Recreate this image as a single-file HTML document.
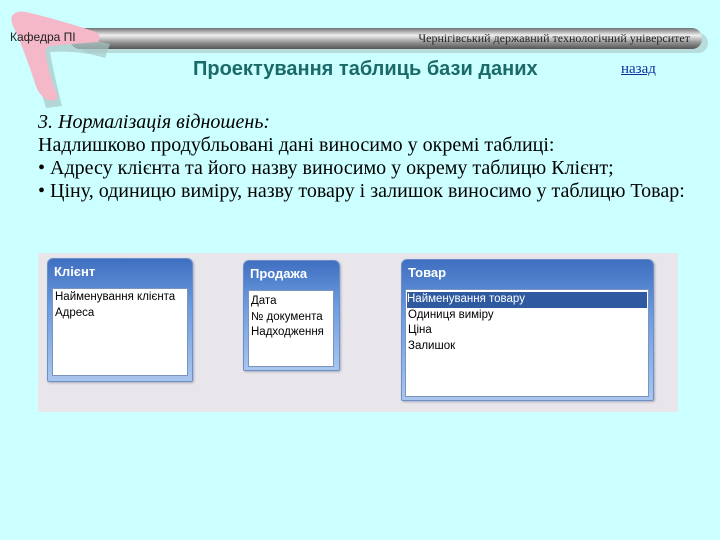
<!DOCTYPE html>
<html><head><meta charset="utf-8"><style>
body{margin:0;width:720px;height:540px;background:#ccffff;position:relative;overflow:hidden;font-family:"Liberation Serif",serif}
.a{position:absolute}
.win{position:absolute;border-radius:6px 6px 2px 2px;background:linear-gradient(#3f6fc0,#6c9be0 40%,#a9c6ee);border:1px solid #6b8fc8;box-shadow:1px 1px 2px #aab}
.win .t{position:absolute;left:6px;top:5px;color:#fff;font:bold 13px "Liberation Sans",sans-serif}
.list{position:absolute;background:#fff;border:1px solid #7b95c0;font:11.5px "Liberation Sans",sans-serif;line-height:15.5px;padding:1px 2px;box-sizing:border-box;white-space:nowrap}
.txt{font-size:20px;color:#000;line-height:23px;white-space:nowrap}
</style></head><body>
<svg class="a" style="left:0;top:0" width="720" height="110">
<defs><linearGradient id="g" x1="0" y1="0" x2="0" y2="1"><stop offset="0" stop-color="#707070"/><stop offset=".35" stop-color="#f0f0f0"/><stop offset=".7" stop-color="#909090"/><stop offset="1" stop-color="#555"/></linearGradient></defs>
<rect x="80" y="33" width="628" height="20" rx="10" fill="#a8c4c4" opacity=".6"/>
<rect x="70" y="28" width="632" height="21" rx="10" fill="url(#g)"/>
<path d="M26 26 Q34 70 46 108 L62 106 Q54 75 50 52 Q80 50 105 58 L110 44 Q70 34 26 26Z" fill="#a8c4c4" opacity=".7"/>
<path d="M12 16 Q16 10 26 12 Q60 20 96 32 Q102 36 98 42 Q70 44 50 46 Q44 48 46 56 Q50 80 58 96 Q56 102 48 100 Q38 96 34 80 Q24 50 14 28 Q10 20 12 16Z" fill="#f4b8c8"/>
<text x="10" y="41" font-family="Liberation Sans,sans-serif" font-size="12" fill="#222">Кафедра ПІ</text>
<text x="690" y="42" text-anchor="end" font-family="Liberation Serif,serif" font-size="12" fill="#222">Чернігівський державний технологічний університет</text>
</svg>
<div class="a" style="left:193px;top:58px;font:bold 20px 'Liberation Sans',sans-serif;color:#1a6a6a;white-space:nowrap">Проектування таблиць бази даних</div>
<div class="a" style="left:621px;top:61px;font-size:15px;color:#1030a0;text-decoration:underline">назад</div>
<div class="a txt" style="left:38px;top:111px"><i>3. Нормалізація відношень:</i><br>Надлишково продубльовані дані виносимо у окремі таблиці:<br>• Адресу клієнта та його назву виносимо у окрему таблицю Клієнт;<br>• Ціну, одиницю виміру, назву товару і залишок виносимо у таблицю Товар:</div>
<div class="a" style="left:38px;top:253px;width:640px;height:159px;background:#e8e6ea"></div>
<div class="win" style="left:47px;top:258px;width:144px;height:122px"><div class="t">Клієнт</div>
<div class="list" style="left:4px;top:29px;width:136px;height:88px">Найменування клієнта<br>Адреса</div></div>
<div class="win" style="left:243px;top:260px;width:95px;height:109px"><div class="t">Продажа</div>
<div class="list" style="left:4px;top:29px;width:86px;height:77px;padding-top:3px">Дата<br>№ документа<br>Надходження</div></div>
<div class="win" style="left:401px;top:259px;width:251px;height:140px"><div class="t">Товар</div>
<div class="list" style="left:3px;top:29px;width:244px;height:108px;padding-top:2px"><div style="background:#2f5aa0;color:#fff;margin:0 -1px">Найменування товару</div>Одиниця виміру<br>Ціна<br>Залишок</div></div>
</body></html>
